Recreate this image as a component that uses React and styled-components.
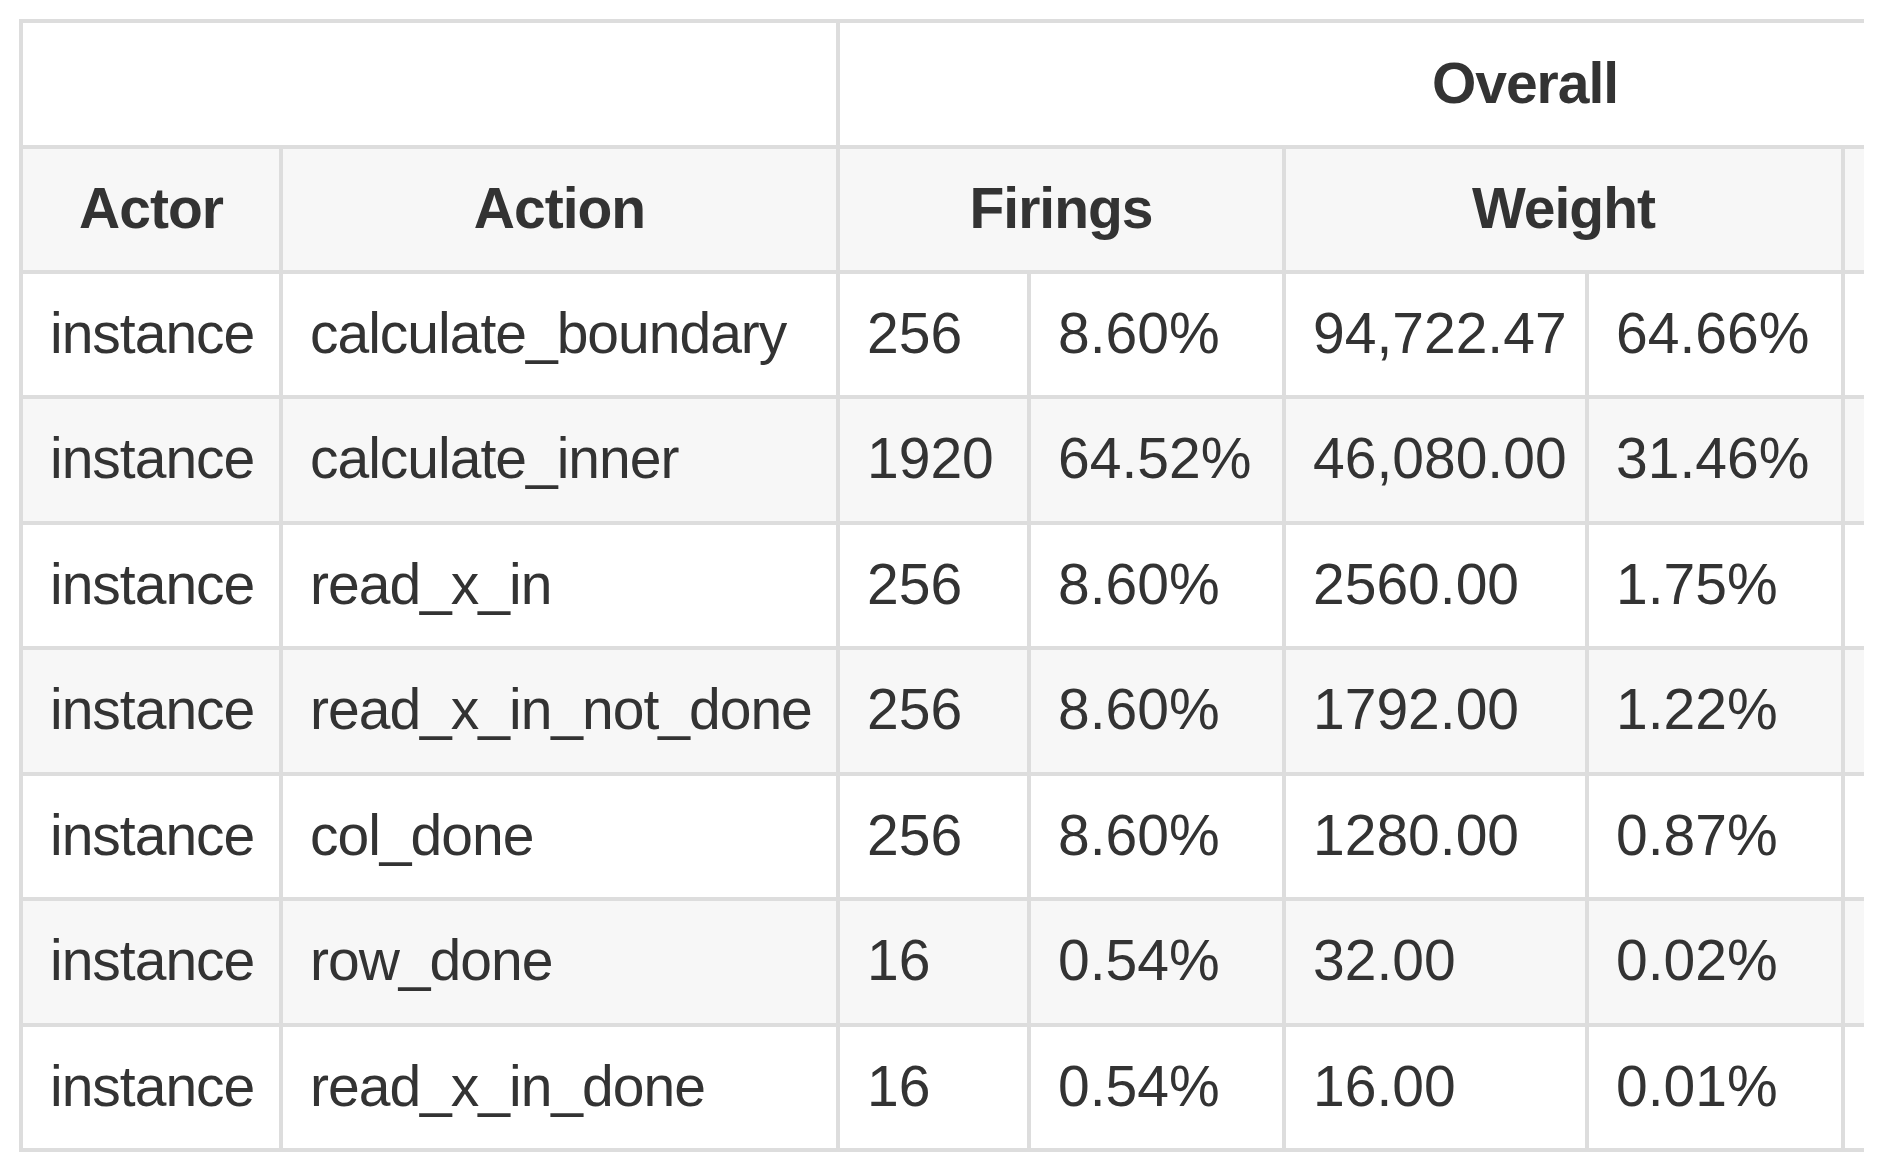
import React from "react";
import styled, { createGlobalStyle } from "styled-components";

const columns = [260, 557, 191, 255, 303, 256, 369];

const rows = [
  ["instance", "calculate_boundary", "256", "8.60%", "94,722.47", "64.66%"],
  ["instance", "calculate_inner", "1920", "64.52%", "46,080.00", "31.46%"],
  ["instance", "read_x_in", "256", "8.60%", "2560.00", "1.75%"],
  ["instance", "read_x_in_not_done", "256", "8.60%", "1792.00", "1.22%"],
  ["instance", "col_done", "256", "8.60%", "1280.00", "0.87%"],
  ["instance", "row_done", "16", "0.54%", "32.00", "0.02%"],
  ["instance", "read_x_in_done", "16", "0.54%", "16.00", "0.01%"],
];

const App = () => {
  return (
    <>
      <GlobalStyle />
      <Frame>
        <Table>
          <colgroup>
            {columns.map((w, i) => (
              <Col key={i} $w={w} />
            ))}
          </colgroup>
          <thead>
            <tr>
              <HeadCell colSpan="2" $h={120} />
              <HeadCell colSpan="5" $h={120}>
                Overall
              </HeadCell>
            </tr>
            <tr>
              <HeadCell $h={119} $shade>
                Actor
              </HeadCell>
              <HeadCell $h={119} $shade>
                Action
              </HeadCell>
              <HeadCell colSpan="2" $h={119} $shade>
                Firings
              </HeadCell>
              <HeadCell colSpan="2" $h={119} $shade>
                Weight
              </HeadCell>
              <HeadCell $h={119} $shade />
            </tr>
          </thead>
          <tbody>
            {rows.map((row, index) => (
              <Row key={index} $shade={index % 2 === 1}>
                {row.map((value, i) => (
                  <Cell key={i} $text={i < 2}>
                    {value}
                  </Cell>
                ))}
                <Cell />
              </Row>
            ))}
          </tbody>
        </Table>
      </Frame>
    </>
  );
};

export default App;

const GlobalStyle = createGlobalStyle`
  body {
    margin: 0;
    background: #fff;
    font-family: "Liberation Sans", Arial, sans-serif;
    color: #333;
  }
`;

const Frame = styled.div`
  margin: 19px 0 0 19px;
  width: 1845px;
  overflow: hidden;
`;

const Table = styled.table`
  width: 2195px;
  table-layout: fixed;
  border-collapse: separate;
  border-spacing: 0;
  border-top: 4px solid #ddd;
  border-left: 4px solid #ddd;
  font-size: 57px;
`;

const Col = styled.col`
  width: ${(p) => p.$w}px;
`;

const HeadCell = styled.th`
  padding: 0 0 2px;
  line-height: ${(p) => p.$h}px;
  background: ${(p) => (p.$shade ? "#f7f7f7" : "#fff")};
  border-right: 4px solid #ddd;
  border-bottom: 4px solid #ddd;
  font-weight: bold;
  text-align: center;
  letter-spacing: -1px;
  white-space: nowrap;
`;

const Row = styled.tr`
  background: ${(p) => (p.$shade ? "#f7f7f7" : "#fff")};
`;

const Cell = styled.td`
  padding: 0 20px 2px 27px;
  line-height: 119.43px;
  border-right: 4px solid #ddd;
  border-bottom: 4px solid #ddd;
  white-space: nowrap;
  text-align: left;
  letter-spacing: ${(p) => (p.$text ? "-1px" : "0")};
`;
